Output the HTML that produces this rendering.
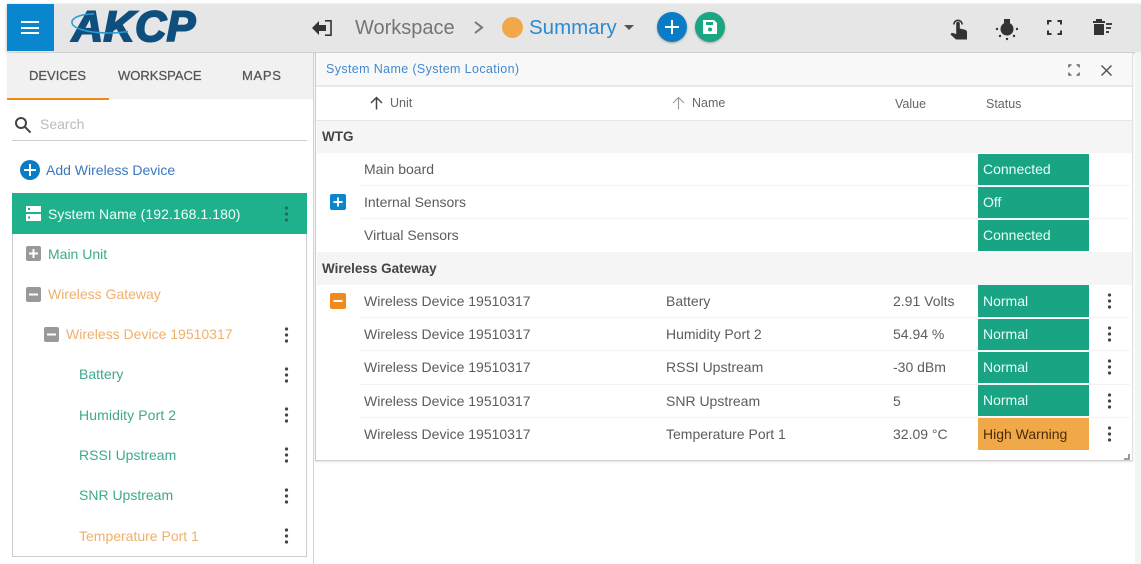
<!DOCTYPE html>
<html><head><meta charset="utf-8"><style>
html,body{margin:0;padding:0;background:#fff}
body{width:1141px;height:564px;position:relative;overflow:hidden;font-family:"Liberation Sans",sans-serif;color:#5c5c5c}
.a{position:absolute}
.t{position:absolute;white-space:nowrap;font-size:14px;line-height:18px}
.g{color:#3ea98f}.o{color:#efb06c}
.tab{font-size:13px;color:#555;-webkit-text-stroke:.25px #555}
.st{position:absolute;left:978px;width:111px;height:31px;background:#19a583;color:#e6fff8;font-size:14px;line-height:31px;text-indent:5px}
.st.n{line-height:33px;height:32px}
.ln{position:absolute;left:360px;width:770px;height:1px;background:#f3f3f3}
.gh{position:absolute;left:317px;width:815px;background:#f5f5f5;font-weight:bold;font-size:13.500px;color:#444;text-indent:5px}
svg{position:absolute;overflow:visible}
</style></head><body>
<div class="a" style="left:7px;top:4px;width:1134px;height:48px;background:#e6e6e6;box-shadow:0 1px 3px rgba(0,0,0,.3)"></div>
<div class="a" style="left:7px;top:4px;width:47px;height:47px;background:#0a86cf"></div>
<div class="a" style="left:21px;top:21px;width:18px;height:2px;background:#fff"></div>
<div class="a" style="left:21px;top:27px;width:18px;height:2px;background:#fff"></div>
<div class="a" style="left:21px;top:32px;width:18px;height:2px;background:#fff"></div>
<div class="t" style="left:72px;top:6px;font-size:43px;line-height:43px;font-weight:bold;font-style:italic;color:#0e4f7e;-webkit-text-stroke:2px #0e4f7e;letter-spacing:.5px">AKCP</div>
<svg style="left:68px;top:10px" width="80" height="30" viewBox="0 0 80 30"><path d="M26 4C12 4 3 8 4 13c1 5 14 10 38 10 6 0 12-.5 18-1.500" fill="none" stroke="#2f9bd6" stroke-width="1.600"/></svg>

<svg style="left:312px;top:20px" width="20" height="16" viewBox="0 0 20 16"><path d="M0 8l7-7v4h7v6H7v4z" fill="#333"/><path d="M13 .8h6v14.400h-6" fill="none" stroke="#333" stroke-width="1.600"/></svg>
<div class="t" style="left:355px;top:15px;font-size:20px;line-height:26px;color:#757575">Workspace</div>
<svg style="left:473px;top:20px" width="12" height="15" viewBox="0 0 12 15"><path d="M2 2l7 5.500L2 13" fill="none" stroke="#777" stroke-width="2"/></svg>
<div class="a" style="left:502px;top:17px;width:21px;height:21px;border-radius:50%;background:#f0a848"></div>
<div class="t" style="left:529px;top:15px;font-size:20.500px;line-height:26px;color:#2a8bd0">Summary</div>
<svg style="left:624px;top:25px" width="10" height="6"><path d="M0 0h10L5 5z" fill="#555"/></svg>
<div class="a" style="left:657px;top:12px;width:30px;height:30px;border-radius:50%;background:#0a7cc6;box-shadow:0 1px 2px rgba(0,0,0,.3)"></div>
<div class="a" style="left:665px;top:26px;width:14px;height:2px;background:#fff"></div>
<div class="a" style="left:671px;top:20px;width:2px;height:14px;background:#fff"></div>
<div class="a" style="left:695px;top:12px;width:30px;height:30px;border-radius:50%;background:#1aa583;box-shadow:0 1px 2px rgba(0,0,0,.3)"></div>
<svg style="left:702px;top:19px" width="16" height="16" viewBox="0 0 16 16"><path d="M1 1h11l3 3v11H1z" fill="#fff"/><rect x="4" y="3" width="7" height="3" fill="#1aa583"/><circle cx="8" cy="10.500" r="2" fill="#1aa583"/></svg>

<svg style="left:950px;top:18px" width="18" height="22" viewBox="0 0 18 22"><path d="M3.800 6.500a4.200 4.200 0 1 1 8.400 0" fill="none" stroke="#333" stroke-width="1.600"/><path d="M6.200 5.500a1.800 1.800 0 0 1 3.600 0V10.500l5.200 1.300c1.400.4 2 1.300 2 2.500v7.200H6l-5.500-5 1.200-1.700 4.500 1.200z" fill="#333"/></svg>
<svg style="left:995px;top:18px" width="24" height="24" viewBox="0 0 24 24"><path d="M9 1h6v6H9z" fill="#333"/><circle cx="12" cy="11" r="6.500" fill="#333"/><g fill="#333"><circle cx="2" cy="11" r="1.200"/><circle cx="22" cy="11" r="1.200"/><circle cx="5" cy="18" r="1.200"/><circle cx="19" cy="18" r="1.200"/><circle cx="12" cy="21" r="1.200"/></g></svg>
<svg style="left:1047px;top:20px" width="15" height="15" viewBox="0 0 15 15"><path d="M1 4.500V1h3.500M10.500 1H14v3.500M14 10.500V14h-3.500M4.500 14H1v-3.500" fill="none" stroke="#333" stroke-width="2"/></svg>
<svg style="left:1092px;top:18px" width="22" height="18" viewBox="0 0 22 18"><path d="M1 3h12v2H1zM4 1h6v2H4zM2 6h10v11H2z" fill="#333"/><path d="M14 5h6v2h-6zM14 9h5v2h-5zM14 13h3v2h-3z" fill="#444"/></svg>

<!-- sidebar -->
<div class="a" style="left:7px;top:53px;width:306px;height:46px;background:#f1f1f1"></div>
<div class="a" style="left:7px;top:98px;width:102px;height:2px;background:#ef8a17"></div>
<div class="a" style="left:313px;top:52px;width:1px;height:512px;background:#d5d5d5"></div>
<div class="t tab" style="left:29px;top:67px">DEVICES</div>
<div class="t tab" style="left:118px;top:67px">WORKSPACE</div>
<div class="t tab" style="left:242px;top:67px;letter-spacing:.7px">MAPS</div>
<svg style="left:14px;top:116px" width="18" height="18" viewBox="0 0 18 18"><circle cx="7" cy="7" r="5" fill="none" stroke="#444" stroke-width="2"/><path d="M11 11l5.500 5.500" stroke="#444" stroke-width="2"/></svg>
<div class="t" style="left:40px;top:115px;color:#bbb">Search</div>
<div class="a" style="left:12px;top:140px;width:295px;height:1px;background:#ccc"></div>
<div class="a" style="left:20px;top:160px;width:20px;height:20px;border-radius:50%;background:#0a7cc6"></div>
<div class="a" style="left:24px;top:169px;width:12px;height:2px;background:#fff"></div>
<div class="a" style="left:29px;top:164px;width:2px;height:12px;background:#fff"></div>
<div class="t" style="left:46px;top:161px;color:#3a78c0">Add Wireless Device</div>
<div class="a" style="left:12px;top:193px;width:293px;height:362px;border:1px solid #ccc"></div>
<div class="a" style="left:12px;top:193px;width:295px;height:41px;background:#1fb08c"></div>
<svg style="left:26px;top:206px" width="15" height="15"><path d="M0 0h15v6H0zM0 8h15v7H0z" fill="#fff"/><rect x="2" y="2" width="2" height="2" fill="#1fb08c"/><rect x="2" y="10.500" width="2" height="2" fill="#1fb08c"/></svg>
<div class="t" style="left:48px;top:205px;color:#f2fffb;letter-spacing:.07px">System Name (192.168.1.180)</div>

<svg style="left:26px;top:246px" width="15" height="15"><rect width="15" height="15" rx="2" fill="#999"/><path d="M3 6.500h9v2H3zM6.500 3h2v9h-2z" fill="#fff"/></svg>
<div class="t g" style="left:48px;top:245px">Main Unit</div>
<svg style="left:26px;top:287px" width="15" height="15"><rect width="15" height="15" rx="2" fill="#999"/><path d="M3 6.500h9v2H3z" fill="#fff"/></svg>
<div class="t o" style="left:48px;top:285px">Wireless Gateway</div>
<svg style="left:44px;top:327px" width="15" height="15"><rect width="15" height="15" rx="2" fill="#999"/><path d="M3 6.500h9v2H3z" fill="#fff"/></svg>
<div class="t o" style="left:66px;top:325px">Wireless Device 19510317</div>
<div class="t g" style="left:79px;top:365px">Battery</div>
<div class="t g" style="left:79px;top:406px;letter-spacing:.1px">Humidity Port 2</div>
<div class="t g" style="left:79px;top:446px">RSSI Upstream</div>
<div class="t g" style="left:79px;top:486px">SNR Upstream</div>
<div class="t o" style="left:79px;top:527px">Temperature Port 1</div>
<svg style="left:284px;top:0" width="6" height="564" fill="#444">
<g fill="#2b6b5c"><circle cx="2.500" cy="208" r="1.600"/><circle cx="2.500" cy="214" r="1.600"/><circle cx="2.500" cy="220" r="1.600"/></g>
<circle cx="2.500" cy="329" r="1.600"/><circle cx="2.500" cy="335" r="1.600"/><circle cx="2.500" cy="341" r="1.600"/>
<circle cx="2.500" cy="369" r="1.600"/><circle cx="2.500" cy="375" r="1.600"/><circle cx="2.500" cy="381" r="1.600"/>
<circle cx="2.500" cy="409" r="1.600"/><circle cx="2.500" cy="415" r="1.600"/><circle cx="2.500" cy="421" r="1.600"/>
<circle cx="2.500" cy="449" r="1.600"/><circle cx="2.500" cy="455" r="1.600"/><circle cx="2.500" cy="461" r="1.600"/>
<circle cx="2.500" cy="490" r="1.600"/><circle cx="2.500" cy="496" r="1.600"/><circle cx="2.500" cy="502" r="1.600"/>
<circle cx="2.500" cy="530" r="1.600"/><circle cx="2.500" cy="536" r="1.600"/><circle cx="2.500" cy="542" r="1.600"/>
</svg>

<!-- panel -->
<div class="a" style="left:315px;top:53px;width:818px;height:408px;background:#fff;border-left:1px solid #ccc;border-right:1px solid #e4e4e4;border-bottom:1px solid #d0d0d0;box-sizing:border-box;box-shadow:0 1px 2px rgba(0,0,0,.12)"></div>
<div class="a" style="left:1135px;top:52px;width:6px;height:512px;background:#f4f4f4"></div>
<div class="a" style="left:316px;top:53px;width:816px;height:32px;background:#f8f8f8;border-bottom:2px solid #e8e8e8"></div>
<div class="t" style="left:326px;top:60px;font-size:12.500px;letter-spacing:.37px;color:#3f8ad0">System Name (System Location)</div>
<svg style="left:1068px;top:64px" width="12" height="12" viewBox="0 0 12 12"><path d="M1 3.500V1h2.500M8.500 1H11v2.500M11 8.500V11H8.500M3.500 11H1V8.500" fill="none" stroke="#666" stroke-width="1.500"/></svg>
<svg style="left:1101px;top:65px" width="11" height="11" viewBox="0 0 11 11"><path d="M0.500 0.500l10 10M10.500 0.500l-10 10" stroke="#555" stroke-width="1.500"/></svg>
<svg style="left:370px;top:96px" width="13" height="14" viewBox="0 0 13 14"><path d="M6.500 13.500V2M1 7l5.500-5.500L12 7" fill="none" stroke="#444" stroke-width="1.500"/></svg>
<div class="t" style="left:390px;top:94px;font-size:12.500px;color:#666">Unit</div>
<svg style="left:672px;top:96px" width="13" height="14" viewBox="0 0 13 14"><path d="M6.500 13.500V2M1 7l5.500-5.500L12 7" fill="none" stroke="#999" stroke-width="1.100"/></svg>
<div class="t" style="left:692px;top:94px;font-size:12.500px;color:#666">Name</div>
<div class="t" style="left:895px;top:95px;font-size:12.500px;color:#666">Value</div>
<div class="t" style="left:986px;top:95px;font-size:12.500px;color:#666">Status</div>
<div class="a" style="left:316px;top:120px;width:816px;height:1px;background:#e5e5e5"></div>

<div class="gh" style="top:121px;height:32px;line-height:31px">WTG</div>
<div class="gh" style="top:252px;height:33px;line-height:33px">Wireless Gateway</div>
<div class="t" style="left:364px;top:160px">Main board</div>
<div class="t" style="left:364px;top:193px">Internal Sensors</div>
<div class="t" style="left:364px;top:226px">Virtual Sensors</div>
<div class="ln" style="top:185px"></div><div class="ln" style="top:218px"></div>
<div class="ln" style="top:317px"></div><div class="ln" style="top:350px"></div><div class="ln" style="top:384px"></div><div class="ln" style="top:417px"></div>
<svg style="left:330px;top:194px" width="16" height="16"><rect width="16" height="16" rx="2" fill="#0a86cf"/><path d="M3.500 7h9v2h-9zM7 3.500h2v9H7z" fill="#fff"/></svg>
<svg style="left:330px;top:293px" width="16" height="16"><rect width="16" height="16" rx="2" fill="#f08a1d"/><path d="M3.500 7h9v2h-9z" fill="#fff"/></svg>

<div class="st" style="top:154px">Connected</div>
<div class="st" style="top:187px">Off</div>
<div class="st" style="top:220px">Connected</div>
<div class="st n" style="top:285px">Normal</div>
<div class="st" style="top:319px">Normal</div>
<div class="st" style="top:352px">Normal</div>
<div class="st" style="top:385px">Normal</div>
<div class="st n" style="top:418px;background:#f0a848;color:#4a2c05">High Warning</div>

<div class="t" style="left:364px;top:292px">Wireless Device 19510317</div>
<div class="t" style="left:364px;top:325px">Wireless Device 19510317</div>
<div class="t" style="left:364px;top:358px">Wireless Device 19510317</div>
<div class="t" style="left:364px;top:392px">Wireless Device 19510317</div>
<div class="t" style="left:364px;top:425px">Wireless Device 19510317</div>
<div class="t" style="left:666px;top:292px">Battery</div>
<div class="t" style="left:666px;top:325px">Humidity Port 2</div>
<div class="t" style="left:666px;top:358px">RSSI Upstream</div>
<div class="t" style="left:666px;top:392px">SNR Upstream</div>
<div class="t" style="left:666px;top:425px">Temperature Port 1</div>
<div class="t" style="left:893px;top:292px">2.91 Volts</div>
<div class="t" style="left:893px;top:325px">54.94 %</div>
<div class="t" style="left:893px;top:358px">-30 dBm</div>
<div class="t" style="left:893px;top:392px">5</div>
<div class="t" style="left:893px;top:425px">32.09 °C</div>
<svg style="left:1107px;top:0" width="6" height="564" fill="#444">
<circle cx="2.500" cy="295" r="1.600"/><circle cx="2.500" cy="301" r="1.600"/><circle cx="2.500" cy="307" r="1.600"/>
<circle cx="2.500" cy="328" r="1.600"/><circle cx="2.500" cy="334" r="1.600"/><circle cx="2.500" cy="340" r="1.600"/>
<circle cx="2.500" cy="361" r="1.600"/><circle cx="2.500" cy="367" r="1.600"/><circle cx="2.500" cy="373" r="1.600"/>
<circle cx="2.500" cy="395" r="1.600"/><circle cx="2.500" cy="401" r="1.600"/><circle cx="2.500" cy="407" r="1.600"/>
<circle cx="2.500" cy="428" r="1.600"/><circle cx="2.500" cy="434" r="1.600"/><circle cx="2.500" cy="440" r="1.600"/>
</svg>
<svg style="left:1124px;top:454px" width="6" height="6"><path d="M5 0v5H0" fill="none" stroke="#666" stroke-width="1.300"/></svg>
</body></html>
